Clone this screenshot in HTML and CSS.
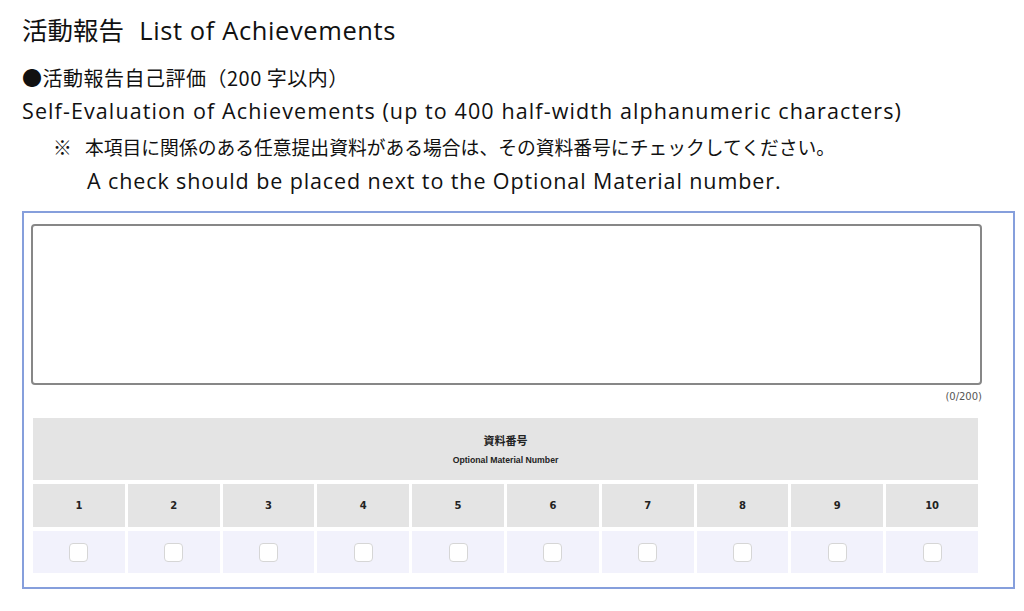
FILE: index.html
```html
<html>
    <head>
        <meta charset="UTF-8">
        <title>活動報告</title>
        <link rel="stylesheet" href="styles.css">
    </head>
    <body>
        <h1 class="title">活動報告&nbsp; <span class="title-en">List of Achievements</span></h1>
        <p class="lead">●活動報告自己評価（200 字以内）</p>
        <p class="lead-en">Self-Evaluation of Achievements (up to 400 half-width alphanumeric characters)</p>
        <p class="note"><span class="mark">※</span>本項目に関係のある任意提出資料がある場合は、その資料番号にチェックしてください。</p>
        <p class="note-en">A check should be placed next to the Optional Material number.</p>

        <div class="panel">
            <textarea class="answer"></textarea>
            <div class="counter">(0/200)</div>
            <div class="materials">
                <div class="mat-head">
                    <span class="mat-jp">資料番号</span>
                    <span class="mat-en">Optional Material Number</span>
                </div>
                <div class="num">1</div>
                <div class="num">2</div>
                <div class="num">3</div>
                <div class="num">4</div>
                <div class="num">5</div>
                <div class="num">6</div>
                <div class="num">7</div>
                <div class="num">8</div>
                <div class="num">9</div>
                <div class="num">10</div>
                <div class="chk"><span class="box"></span></div>
                <div class="chk"><span class="box"></span></div>
                <div class="chk"><span class="box"></span></div>
                <div class="chk"><span class="box"></span></div>
                <div class="chk"><span class="box"></span></div>
                <div class="chk"><span class="box"></span></div>
                <div class="chk"><span class="box"></span></div>
                <div class="chk"><span class="box"></span></div>
                <div class="chk"><span class="box"></span></div>
                <div class="chk"><span class="box"></span></div>
            </div>
        </div>
    </body>
</html>
```

FILE: styles.css
```css
body{margin:0; padding:0 0 0 22px; font-family:"Open Sans","Noto Sans CJK JP",sans-serif; color:#111; background:#fff;}

.title{font-size:25.5px; font-weight:normal; margin:0; padding-top:13px; line-height:34px;}
.title-en{letter-spacing:0.6px; margin-left:2px;}
.lead{font-family:"Noto Sans CJK JP",sans-serif; font-size:20px; letter-spacing:0.5px; margin:0; padding-top:18px; line-height:26px;}
.lead-en{font-size:21.5px; letter-spacing:1.1px; margin:0; line-height:40px;}
.note{font-family:"Noto Sans CJK JP",sans-serif; font-size:18.8px; margin:0; padding-left:31px; line-height:32px;}
.note .mark{display:inline-block; width:32px;}
.note-en{font-size:21.5px; letter-spacing:0.9px; margin:0; padding-left:65px; line-height:36px;}

.panel{width:970px; margin-top:12px; border:2px solid #869fdc; padding:11px 12px 14px 7px;}
.answer{display:block; width:951px; height:161px; box-sizing:border-box; border:2px solid #878787; border-radius:4px; resize:none; margin:0;}
.counter{width:951px; text-align:right; font-family:"DejaVu Sans",sans-serif; font-size:10px; color:#555; line-height:24px; height:24px; margin-bottom:9px;}

.materials{display:grid; grid-template-columns:repeat(10,1fr); column-gap:3px; row-gap:4px; width:945px; margin-left:2px; font-family:"DejaVu Sans",sans-serif; font-weight:bold; color:#222;}
.mat-head{grid-column:1 / span 10; height:62px; background:#e4e4e4; display:flex; flex-direction:column; align-items:center; justify-content:center; gap:9px;}
.mat-jp{font-family:"Noto Sans CJK JP",sans-serif; font-size:11px; font-weight:bold; line-height:12px;}
.mat-en{font-family:"Liberation Sans",sans-serif; font-size:8.7px; line-height:10px;}
.num{height:43px; background:#e4e4e4; display:flex; align-items:center; justify-content:center; font-size:10px;}
.chk{height:42px; background:#f2f2fc; display:flex; align-items:center; justify-content:center;}
.box{width:17px; height:17px; background:#fff; border:1px solid #d6d6d6; border-radius:4px;}
```
